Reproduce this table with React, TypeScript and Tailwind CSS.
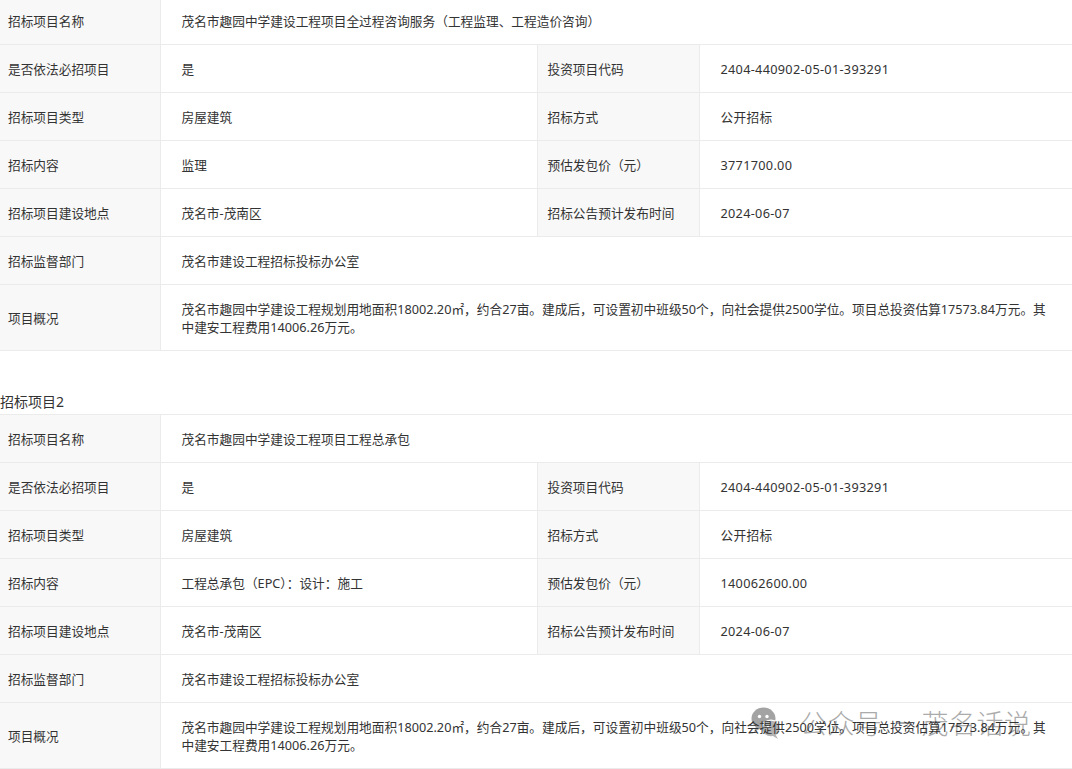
import React from 'react';

type Row = { label: string; value: string; label2?: string; value2?: string };

const summary =
    "茂名市趣园中学建设工程规划用地面积18002.20㎡，约合27亩。建成后，可设置初中班级50个，向社会提供2500学位。项目总投资估算17573.84万元。其中建安工程费用14006.26万元。";

const project1: Row[] = [
    { label: "招标项目名称", value: "茂名市趣园中学建设工程项目全过程咨询服务（工程监理、工程造价咨询）" },
    { label: "是否依法必招项目", value: "是", label2: "投资项目代码", value2: "2404-440902-05-01-393291" },
    { label: "招标项目类型", value: "房屋建筑", label2: "招标方式", value2: "公开招标" },
    { label: "招标内容", value: "监理", label2: "预估发包价（元）", value2: "3771700.00" },
    { label: "招标项目建设地点", value: "茂名市-茂南区", label2: "招标公告预计发布时间", value2: "2024-06-07" },
    { label: "招标监督部门", value: "茂名市建设工程招标投标办公室" },
    { label: "项目概况", value: summary },
];

const project2: Row[] = [
    { label: "招标项目名称", value: "茂名市趣园中学建设工程项目工程总承包" },
    { label: "是否依法必招项目", value: "是", label2: "投资项目代码", value2: "2404-440902-05-01-393291" },
    { label: "招标项目类型", value: "房屋建筑", label2: "招标方式", value2: "公开招标" },
    { label: "招标内容", value: "工程总承包（EPC）：设计：施工", label2: "预估发包价（元）", value2: "140062600.00" },
    { label: "招标项目建设地点", value: "茂名市-茂南区", label2: "招标公告预计发布时间", value2: "2024-06-07" },
    { label: "招标监督部门", value: "茂名市建设工程招标投标办公室" },
    { label: "项目概况", value: summary },
];

const cell = "border border-[#ebebeb] pt-[15px] pb-[14px] leading-[18px] align-middle";

const InfoTable = ({ rows }: { rows: Row[] }) => (
    <table className="w-full table-fixed border-collapse">
        <colgroup>
            <col className="w-[160px]" />
            <col className="w-[377px]" />
            <col className="w-[162px]" />
            <col />
        </colgroup>
        <tbody>
            {rows.map((row, i) => (
                <tr key={i}>
                    <td className={`${cell} bg-[#f8f8f8] pl-[8px] pr-2 border-l-0`}>{row.label}</td>
                    {row.label2 ? (
                        <>
                            <td className={`${cell} pl-[21px] pr-2`}>{row.value}</td>
                            <td className={`${cell} bg-[#f8f8f8] pl-[10px] pr-2`}>{row.label2}</td>
                            <td className={`${cell} pl-[21px] pr-2 border-r-0 tracking-[0.3px]`}>{row.value2}</td>
                        </>
                    ) : (
                        <td colSpan={3} className={`${cell} pl-[21px] pr-[20px] border-r-0`}>{row.value}</td>
                    )}
                </tr>
            ))}
        </tbody>
    </table>
);

// WeChat style bubble logo for the watermark
const WeChatMark = () => (
    <svg width="30" height="34" viewBox="0 0 30 34">
        <ellipse cx="12.5" cy="12.5" rx="12" ry="11" fill="#a3a3a3" />
        <path d="M5 20 L3.5 26 L10 22 Z" fill="#a3a3a3" />
        <circle cx="8.5" cy="10.5" r="1.7" fill="#fff" />
        <circle cx="16" cy="10.5" r="1.7" fill="#fff" />
        <ellipse cx="20" cy="22.5" rx="10" ry="9" fill="#fff" />
        <ellipse cx="20" cy="22.5" rx="8.6" ry="7.7" fill="#b3b3b3" />
        <path d="M24.5 28.5 L27 33 L21.5 29.8 Z" fill="#b3b3b3" />
        <circle cx="17" cy="21" r="1.3" fill="#fff" />
        <circle cx="23" cy="21" r="1.3" fill="#fff" />
    </svg>
);

const App = () => {
    return (
        <div
            className="relative w-[1072px] h-[769px] overflow-hidden bg-white text-[12.7px] text-[#333]"
            style={{ fontFamily: '"Noto Sans", "Noto Sans CJK SC", sans-serif' }}
        >
            {/* watermark, sits under the table text */}
            <div className="absolute z-0 left-[751px] top-[706px] flex items-center gap-[19px] pointer-events-none">
                <WeChatMark />
                <div
                    className="flex items-center text-[27px] leading-[32px] text-[#ababab] tracking-[0.5px]"
                    style={{ fontFamily: '"Noto Sans CJK SC", sans-serif', fontWeight: 300 }}
                >
                    <span>公众号</span>
                    <span className="ml-[14px] mr-[12px] inline-block w-[13px] h-[2px] bg-[#ababab]" />
                    <span>茂名话说</span>
                </div>
            </div>

            <div className="relative z-10">
                <div className="-mt-[4px]">
                    <InfoTable rows={project1} />
                </div>

                {/* second project */}
                <h3 className="mt-[39px] text-[14px] leading-[24px] font-normal">招标项目2</h3>
                <InfoTable rows={project2} />
            </div>
        </div>
    );
};

export default App;
